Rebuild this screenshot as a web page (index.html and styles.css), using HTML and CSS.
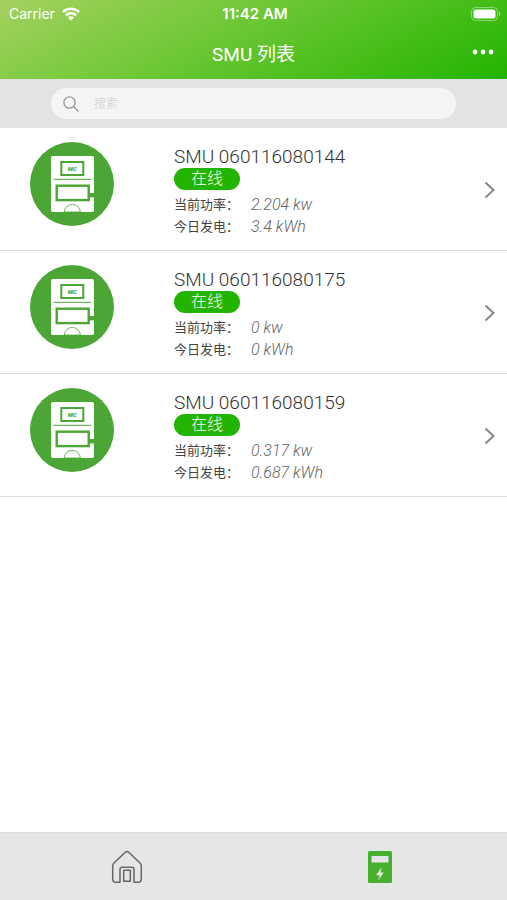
FILE: index.html
```html
<!DOCTYPE html>
<html lang="zh-CN">
<head>
    <meta charset="UTF-8">
    <meta name="viewport" content="width=device-width, initial-scale=1.0">
    <title>SMU 列表</title>
    <link rel="stylesheet" href="styles.css">
</head>
<body>
    <header class="header">
        <div class="status-bar">
            <div class="carrier">
                Carrier
                <svg width="18" height="14" viewBox="0 0 18 14" fill="none" stroke="#fff" stroke-width="2.6">
                    <path d="M0.9 5.1a11.6 11.6 0 0 1 16.2 0"/>
                    <path d="M3.9 8.3a7.3 7.3 0 0 1 10.2 0"/>
                    <path d="M9 13.6L6 10.6a4.3 4.3 0 0 1 6 0z" fill="#fff" stroke="none"/>
                </svg>
            </div>
            <div class="time">11:42 AM</div>
            <div class="battery">
                <svg width="30" height="14" viewBox="0 0 30 14">
                    <rect x="0.5" y="0.5" width="26" height="13" rx="4" fill="none" stroke="#fff" stroke-opacity="0.4"/>
                    <rect x="2.5" y="2.5" width="22" height="9" rx="2.5" fill="#fff"/>
                    <path d="M28 4.8c1.8 0.6 1.8 3.8 0 4.4z" fill="#fff" fill-opacity="0.5"/>
                </svg>
            </div>
        </div>
        <div class="nav-bar">
            <h1>SMU 列表</h1>
            <button class="more" type="button" aria-label="更多">
                <svg width="22" height="6" viewBox="0 0 22 6" fill="#fff">
                    <circle cx="3" cy="3" r="2.4"/>
                    <circle cx="11" cy="3" r="2.4"/>
                    <circle cx="19" cy="3" r="2.4"/>
                </svg>
            </button>
        </div>
    </header>

    <form class="search">
        <label class="search-box">
            <svg width="16" height="16" viewBox="0 0 16 16" fill="none" stroke="#999" stroke-width="1.4">
                <circle cx="6.5" cy="6.5" r="5.6"/>
                <path d="M10.6 10.6L15.4 15.4"/>
            </svg>
            <input type="search" placeholder="搜索" aria-label="搜索">
        </label>
    </form>

    <main class="list">
        <a class="item" href="#">
            <svg class="device" viewBox="0 0 84 84">
                <g id="device">
                    <circle cx="42" cy="42" r="42" fill="#4ca635"/>
                    <rect x="21" y="14" width="43" height="56" rx="2" fill="#fff"/>
                    <rect x="31.3" y="20" width="22" height="13" fill="none" stroke="#4ca635" stroke-width="2"/>
                    <text x="42.3" y="28.7" font-size="6" font-weight="900" font-style="italic" text-anchor="middle" fill="#4ca635">MC</text>
                    <path d="M23.5 37.3H61" stroke="#4ca635" stroke-width="1"/>
                    <rect x="26.7" y="43.7" width="32" height="14.4" fill="none" stroke="#4ca635" stroke-width="2.4"/>
                    <rect x="59" y="51" width="5" height="4.4" fill="#4ca635"/>
                    <path d="M34.3 70a8 7.6 0 0 1 16 0z" fill="#fff" stroke="#4ca635" stroke-width="0.8"/>
                </g>
            </svg>
            <div class="info">
                <h2>SMU 060116080144</h2>
                <span class="badge">在线</span>
                <dl>
                    <dt>当前功率：</dt><dd>2.204 kw</dd>
                    <dt>今日发电：</dt><dd>3.4 kWh</dd>
                </dl>
            </div>
            <svg class="arrow" viewBox="0 0 11 18"><path d="M1.5 1.5L9.5 9L1.5 16.5"/></svg>
        </a>
        <a class="item" href="#">
            <svg class="device" viewBox="0 0 84 84"><use href="#device"/></svg>
            <div class="info">
                <h2>SMU 060116080175</h2>
                <span class="badge">在线</span>
                <dl>
                    <dt>当前功率：</dt><dd>0 kw</dd>
                    <dt>今日发电：</dt><dd>0 kWh</dd>
                </dl>
            </div>
            <svg class="arrow" viewBox="0 0 11 18"><path d="M1.5 1.5L9.5 9L1.5 16.5"/></svg>
        </a>
        <a class="item" href="#">
            <svg class="device" viewBox="0 0 84 84"><use href="#device"/></svg>
            <div class="info">
                <h2>SMU 060116080159</h2>
                <span class="badge">在线</span>
                <dl>
                    <dt>当前功率：</dt><dd>0.317 kw</dd>
                    <dt>今日发电：</dt><dd>0.687 kWh</dd>
                </dl>
            </div>
            <svg class="arrow" viewBox="0 0 11 18"><path d="M1.5 1.5L9.5 9L1.5 16.5"/></svg>
        </a>
    </main>

    <nav class="tab-bar">
        <a href="#" aria-label="首页">
            <svg width="32" height="34" viewBox="0 0 32 34" fill="none" stroke="#666" stroke-width="1.5" stroke-linejoin="round">
                <path d="M16 1.5Q15 1.5 14 2.5L3 13Q1.7 14.3 1.7 16V29Q1.7 32.3 5 32.3H9V19.5Q9 17.3 11.2 17.3H20.8Q23 17.3 23 19.5V32.3H27Q30.3 32.3 30.3 29V16Q30.3 14.3 29 13L18 2.5Q17 1.5 16 1.5z"/>
                <rect x="12.7" y="20.3" width="6.6" height="11"/>
            </svg>
        </a>
        <a href="#" aria-label="SMU">
            <svg width="24" height="34" viewBox="0 0 24 34">
                <rect y="1" width="24" height="32" rx="1.5" fill="#47b02c"/>
                <rect x="3.5" y="6" width="17" height="6.5" fill="#e6e6e6"/>
                <path d="M13.8 17L8 25.2H11.6L10 30.5L15.8 22.5H12.4z" fill="#e6e6e6"/>
            </svg>
        </a>
    </nav>
</body>
</html>
```
FILE: styles.css
```css
* {
    box-sizing: border-box;
    margin: 0;
    padding: 0;
}

body {
    display: flex;
    flex-direction: column;
    min-height: 100vh;
    background: #fff;
    color: #333;
    font-family: Roboto, "Noto Sans CJK SC", sans-serif;
    font-weight: 300;
}

svg {
    display: block;
}

/* Header */
.header {
    background: linear-gradient(152deg, #a5d160, #74c93a 38%, #22b400);
    color: #fff;
}

.status-bar {
    display: grid;
    grid-template-columns: 1fr auto 1fr;
    align-items: center;
    height: 27px;
    padding: 0 6px 0 9px;
    font-family: Inter, sans-serif;
    font-size: 14px;
}

.carrier {
    display: flex;
    align-items: center;
    gap: 7px;
    font-weight: 400;
}

.time {
    font-size: 15px;
    font-weight: 600;
}

.battery {
    justify-self: end;
}

.nav-bar {
    display: grid;
    grid-template-columns: 1fr auto 1fr;
    align-items: center;
    height: 52px;
    padding: 0 13px 2px;
}

.nav-bar h1 {
    grid-column: 2;
    font-size: 19px;
    font-weight: 400;
}

.more {
    justify-self: end;
    border: none;
    background: none;
    cursor: pointer;
}

/* Search */
.search {
    padding: 9px 10%;
    background: #e3e3e3;
}

.search-box {
    display: flex;
    align-items: center;
    gap: 15px;
    height: 31px;
    padding: 0 12px;
    border-radius: 16px;
    background: #f5f5f5;
}

.search-box input {
    flex: 1;
    min-width: 0;
    border: none;
    outline: none;
    background: none;
    font: inherit;
    font-size: 12px;
}

.search-box input::placeholder {
    color: #ccc;
}

/* List */
.list {
    flex: 1;
}

.item {
    display: flex;
    align-items: center;
    padding: 14px 12px 12px 30px;
    border-bottom: 1px solid #ddd;
    color: inherit;
    text-decoration: none;
}

.device {
    align-self: flex-start;
    width: 84px;
    height: 84px;
    margin-right: 60px;
}

.info {
    flex: 1;
    padding-top: 4px;
}

.info h2 {
    font-size: 19px;
    font-weight: 300;
    line-height: 22px;
}

.badge {
    display: block;
    width: 66px;
    margin-bottom: 4px;
    border-radius: 11px;
    background: #22b400;
    color: #fff;
    font-size: 16px;
    line-height: 22px;
    text-align: center;
}

.info dl {
    display: grid;
    grid-template-columns: 77px 1fr;
    line-height: 22px;
}

.info dt {
    color: #444;
    font-size: 13px;
    font-weight: 400;
}

.info dd {
    color: #666;
    font-size: 16px;
    font-style: italic;
}

.arrow {
    width: 11px;
    height: 18px;
    fill: none;
    stroke: #888;
    stroke-width: 2;
}

/* Bottom tabs */
.tab-bar {
    display: flex;
    height: 68px;
    border-top: 1px solid #ddd;
    background: #e6e6e6;
}

.tab-bar a {
    display: flex;
    flex: 1;
    align-items: center;
    justify-content: center;
}
```
